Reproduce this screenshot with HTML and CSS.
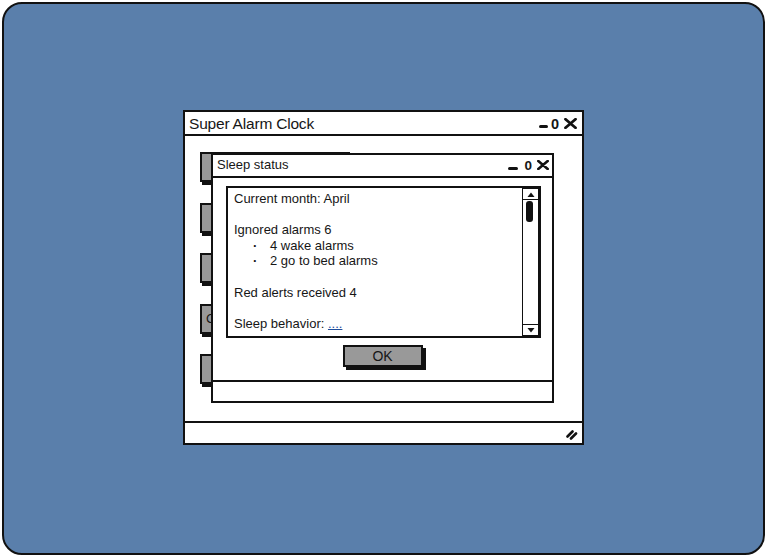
FILE: index.html
```html
<!DOCTYPE html>
<html>
<head>
<meta charset="utf-8">
<title>Super Alarm Clock</title>
<link rel="stylesheet" href="styles.css">
</head>
<body>
<div class="desktop">
  <div class="window main">
    <div class="titlebar">
      <span class="title">Super Alarm Clock</span>
      <span class="controls">
        <span class="ctl-min"></span>
        <span class="ctl-max">0</span>
        <svg class="ctl-close" width="13" height="11" viewBox="0 0 13 11"><path d="M1.5 1.2 L11.5 9.8 M11.5 1.2 L1.5 9.8" stroke="#111" stroke-width="2.8" stroke-linecap="round"/></svg>
      </span>
    </div>
    <div class="body">
      <div class="btnlist">
        <div class="btn"></div>
        <div class="btn"></div>
        <div class="btn"></div>
        <div class="btn">C</div>
        <div class="btn"></div>
      </div>
      <div class="window dialog">
        <div class="titlebar dlg-title">
          <span class="title">Sleep status</span>
          <span class="controls">
            <span class="ctl-min"></span>
            <span class="ctl-max">0</span>
            <svg class="ctl-close" width="12" height="10" viewBox="0 0 12 10"><path d="M1.3 1.1 L10.7 8.9 M10.7 1.1 L1.3 8.9" stroke="#111" stroke-width="2.6" stroke-linecap="round"/></svg>
          </span>
        </div>
        <div class="dlg-body">
          <div class="textbox">
            <div class="line">Current month: April</div>
            <div class="line"></div>
            <div class="line">Ignored alarms 6</div>
            <div class="line item"><span class="dot">·</span>4 wake alarms</div>
            <div class="line item"><span class="dot">·</span>2 go to bed alarms</div>
            <div class="line"></div>
            <div class="line">Red alerts received 4</div>
            <div class="line"></div>
            <div class="line">Sleep behavior: <a class="link">....</a></div>
            <div class="scrollbar">
              <div class="arrow up"><svg width="10" height="7" viewBox="0 0 10 7"><path d="M1.5 6 L5 1.5 L8.5 6 Z" fill="#111"/></svg></div>
              <div class="track"><div class="thumb"></div></div>
              <div class="arrow down"><svg width="10" height="7" viewBox="0 0 10 7"><path d="M1.5 1 L5 5.5 L8.5 1 Z" fill="#111"/></svg></div>
            </div>
          </div>
          <div class="okrow"><div class="okbtn">OK</div></div>
        </div>
        <div class="statusbar dlg-status"></div>
      </div>
    </div>
    <div class="statusbar main-status">
      <svg class="grip" width="12" height="12" viewBox="0 0 12 12"><path d="M1.5 8.5 L6.5 3.5 M5 10.5 L10 5.5" stroke="#111" stroke-width="2.6" stroke-linecap="round"/></svg>
    </div>
  </div>
</div>
</body>
</html>
```
FILE: styles.css
```css
* { box-sizing: border-box; }
html, body { margin: 0; padding: 0; background: #fff; }
body {
  width: 767px;
  height: 557px;
  overflow: hidden;
  font-family: "Liberation Sans", Arial, sans-serif;
  color: #161616;
}
.desktop {
  margin: 2px 0 0 2px;
  width: 763px;
  height: 553px;
  border: 2px solid #111;
  border-radius: 20px;
  background: #5a7fab;
  padding-top: 106px;
  display: flex;
  justify-content: center;
  align-items: flex-start;
}
.window {
  background: #fff;
  border: 2px solid #111;
  display: flex;
  flex-direction: column;
}
.main {
  width: 401px;
  height: 335px;
}
.titlebar {
  display: flex;
  align-items: center;
  justify-content: space-between;
  border-bottom: 2px solid #111;
  flex: none;
}
.main > .titlebar {
  height: 24px;
  padding: 0 5px 0 4px;
}
.main > .titlebar .title {
  font-size: 15.5px;
  letter-spacing: -0.2px;
  margin-top: 1px;
}
.controls {
  display: flex;
  align-items: center;
}
.ctl-min {
  display: inline-block;
  width: 9px;
  height: 3px;
  background: #111;
  border-radius: 2px;
  margin-top: 7px;
  margin-right: 3px;
}
.ctl-max {
  font-weight: bold;
  font-size: 14.5px;
  margin-right: 5px;
  margin-top: 1px;
}
.body {
  flex: 1;
  position: relative;
  padding: 16px 0 0 15px;
}
.btnlist {
  display: flex;
  flex-direction: column;
  gap: 20.5px;
}
.btn {
  width: 150px;
  height: 30px;
  background: #999;
  border: 2px solid #111;
  box-shadow: 2px 3px 0 #111;
  font-size: 13px;
  line-height: 26px;
  padding-left: 4px;
}
.statusbar {
  border-top: 2px solid #111;
  flex: none;
}
.main-status {
  height: 22px;
  display: flex;
  align-items: center;
  justify-content: flex-end;
  padding-right: 4px;
}
.grip { margin-top: 1px; }

/* dialog */
.dialog {
  position: absolute;
  left: 26px;
  top: 17px;
  width: 343px;
  height: 250px;
}
.dlg-title {
  height: 23px;
  padding: 0 3px 0 4px;
}
.dlg-title .title {
  font-size: 13px;
  margin-top: -2px;
}
.dlg-title .controls { margin-top: -2px; }
.dlg-title .ctl-min { width: 10px; margin-top: 7px; margin-right: 6px; }
.dlg-title .ctl-max { font-size: 13.5px; margin-right: 5px; }
.dlg-body {
  flex: 1;
  padding: 8px 0 0 13px;
}
.textbox {
  position: relative;
  width: 315px;
  height: 152px;
  border: 2px solid #111;
  padding: 3px 0 0 6px;
  font-size: 13px;
}
.line {
  height: 15.6px;
  line-height: 15.6px;
  white-space: nowrap;
}
.item { padding-left: 19px; }
.dot {
  display: inline-block;
  width: 17px;
  font-weight: bold;
}
.link {
  color: #1f4e9c;
  text-decoration: underline;
}
.scrollbar {
  position: absolute;
  right: 0;
  top: 0;
  bottom: 0;
  width: 17px;
  border: 1.5px solid #111;
  display: flex;
  flex-direction: column;
  background: #fff;
}
.arrow {
  height: 11px;
  display: flex;
  align-items: center;
  justify-content: center;
  flex: none;
}
.arrow.up { border-bottom: 1.5px solid #111; }
.arrow.down { border-top: 1.5px solid #111; }
.track {
  flex: 1;
  position: relative;
}
.thumb {
  position: absolute;
  left: 2.5px;
  top: 1px;
  width: 7px;
  height: 21px;
  background: #111;
  border-radius: 3px;
}
.okrow {
  display: flex;
  justify-content: center;
  margin-top: 7px;
  margin-left: -13px;
}
.okbtn {
  width: 80px;
  height: 22px;
  background: #999;
  border: 2px solid #111;
  box-shadow: 3px 3px 0 #111;
  font-size: 14px;
  text-align: center;
  line-height: 19px;
}
.dlg-status {
  height: 21px;
}
```
